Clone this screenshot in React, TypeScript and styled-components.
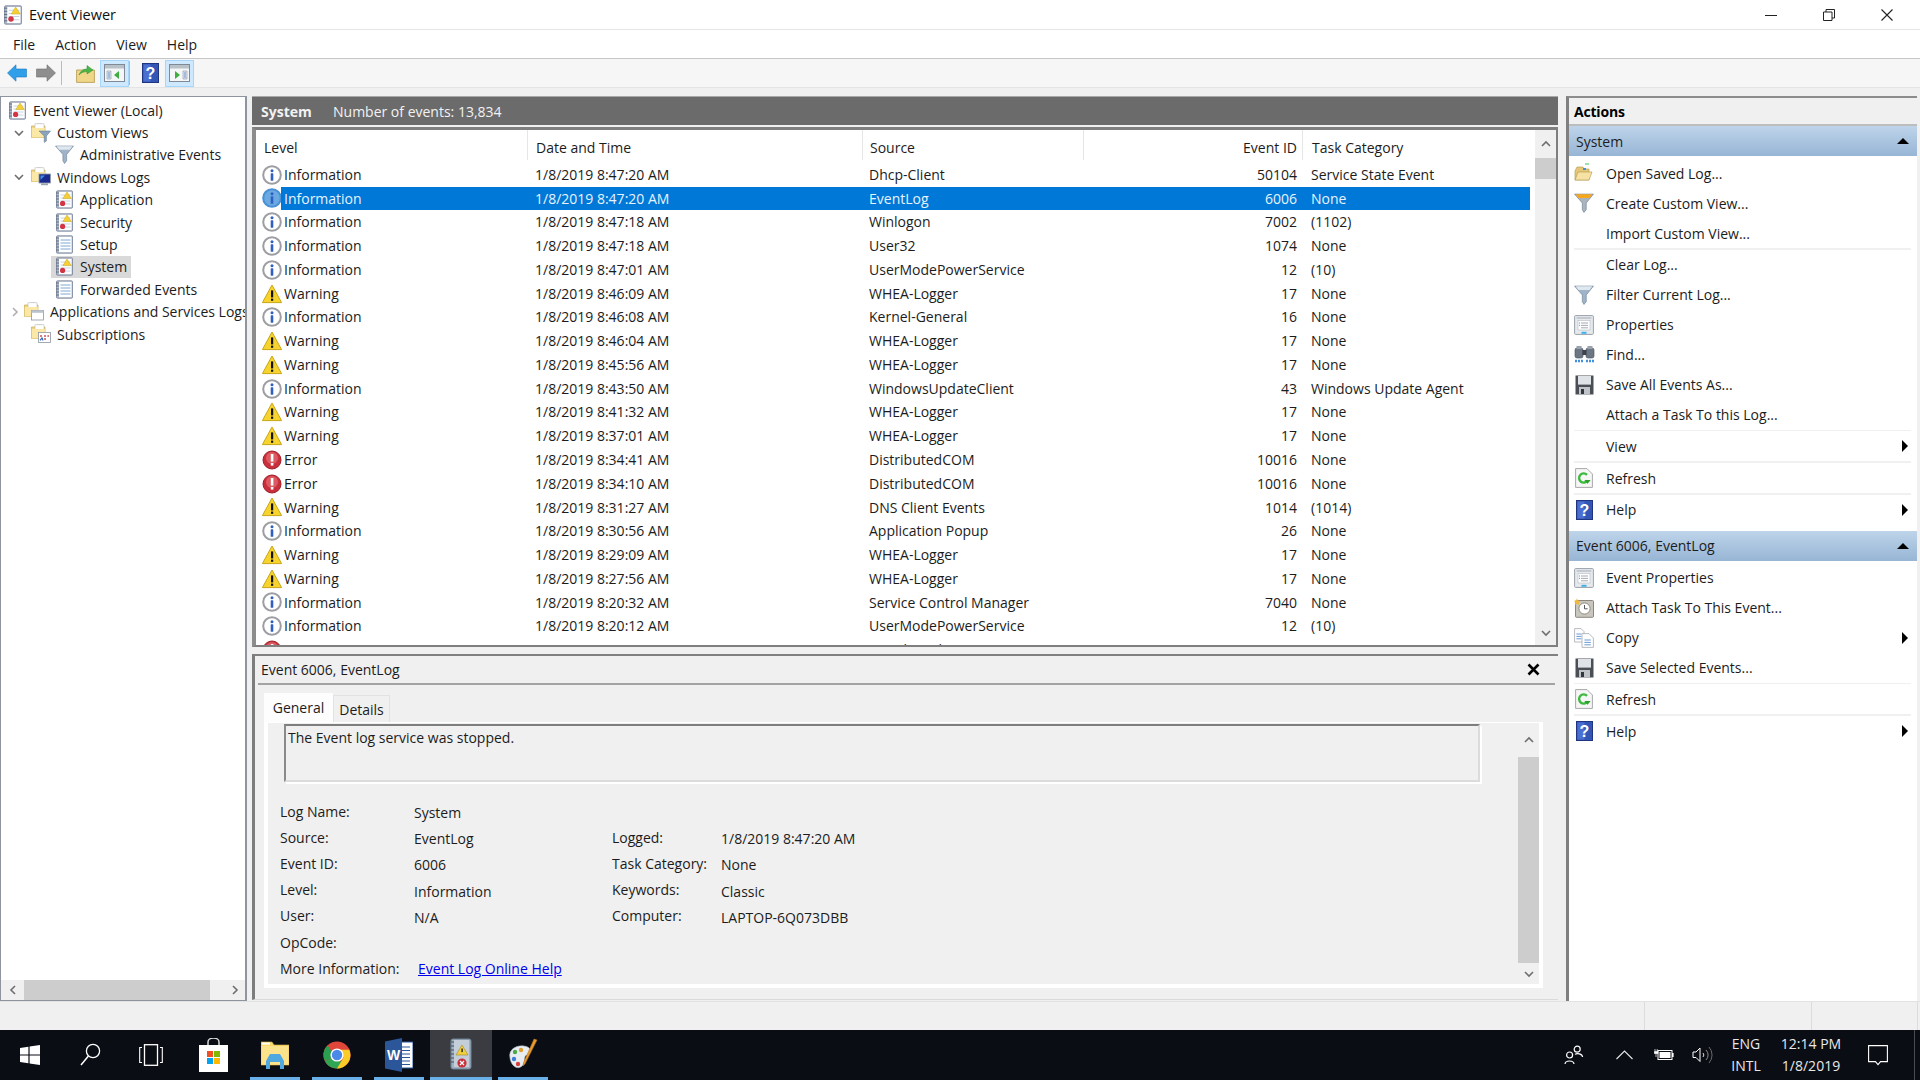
import * as React from "react";
import styled, { createGlobalStyle } from "styled-components";

const GlobalStyle = createGlobalStyle`
  html, body { margin: 0; padding: 0; background: #f0f0f0; }
  body {
    font-family: "Open Sans", "Noto Sans", "Liberation Sans", sans-serif;
    font-size: 14px;
    color: #1c1c1c;
    overflow: hidden;
  }
  svg { display: block; flex: none; }
`;

/* ---------- icons ---------- */

const InfoIcon = ({ selected }: { selected?: boolean }) => (
  <svg width="20" height="20" viewBox="0 0 20 20">
    <circle cx="10" cy="10" r="8.8" fill={selected ? "#6aa9e2" : "#fff"} stroke={selected ? "#4a90d4" : "#9c9ea3"} strokeWidth="2" />
    <circle cx="10" cy="5.8" r="1.5" fill="#2f5fc0" />
    <rect x="8.7" y="8.2" width="2.6" height="7.6" rx="0.6" fill="#2f5fc0" />
  </svg>
);

const WarnIcon = () => (
  <svg width="20" height="20" viewBox="0 0 20 20">
    <path d="M10 1 L19.6 18.6 H0.4 Z" fill="#f6d32d" stroke="#c9a616" strokeLinejoin="round" />
    <rect x="9" y="6.4" width="2.2" height="7" fill="#111" />
    <rect x="9" y="14.6" width="2.2" height="2.2" fill="#111" />
  </svg>
);

const ErrorIcon = () => (
  <svg width="20" height="20" viewBox="0 0 20 20">
    <circle cx="10" cy="10" r="9" fill="#c92f3b" stroke="#9c1f2a" />
    <circle cx="10" cy="8" r="6" fill="#dc5a62" />
    <rect x="8.8" y="4" width="2.6" height="7.6" fill="#fff" />
    <rect x="8.8" y="13" width="2.6" height="2.6" fill="#fff" />
  </svg>
);

const BookIcon = ({ size = 19, plain }: { size?: number; plain?: boolean }) => (
  <svg width={size} height={size} viewBox="0 0 19 19">
    <rect x="1.5" y="0.8" width="16" height="17.4" rx="1" fill="#aeb9c8" stroke="#77839a" strokeWidth="0.8" />
    <rect x="4" y="1.8" width="12.6" height="15.4" fill="#fff" />
    <path d="M1 3h3M1 6h3M1 9h3M1 12h3M1 15h3" stroke="#5d6980" strokeWidth="0.9" />
    <path d="M5.5 5h10M5.5 8h10M5.5 11h10M5.5 14h10" stroke={plain ? "#7ea6d6" : "#c5d2e2"} strokeWidth="1" />
    {!plain && (
      <>
        <path d="M12 2 L16.4 8.6 H7.8 Z" fill="#f5cf34" stroke="#c9a616" strokeWidth="0.5" />
        <circle cx="7.6" cy="13.4" r="2.6" fill="#d23644" />
      </>
    )}
  </svg>
);

const Funnel = ({ size = 18, tone = "#9fb4c8", top = "#dfe7ef" }: { size?: number; tone?: string; top?: string }) => (
  <svg width={size} height={size} viewBox="0 0 18 18">
    <path d="M0.5 1 H17.5 L11 9 V15 L9 17.5 L7.5 15 V9 Z" fill={tone} stroke="#6f8296" strokeWidth="0.6" />
    <path d="M1.5 1.2 H16.5 L14 4.4 H4 Z" fill={top} />
  </svg>
);

const FolderBase = ({ children }: { children?: React.ReactNode }) => (
  <svg width="20" height="20" viewBox="0 0 20 20">
    <path d="M0.5 3 H5 L6 1 H11 V3 H14 V14.5 H0.5 Z" fill="#f2d680" stroke="#c9a94f" strokeWidth="0.7" />
    <rect x="4" y="0.8" width="9" height="6" fill="#fff" stroke="#b7bcc4" strokeWidth="0.6" />
    <rect x="0.8" y="5" width="13" height="9.4" fill="#fbe8a6" />
    {children}
  </svg>
);

const FolderFunnel = () => (
  <FolderBase>
    <path d="M8 8 H19.5 L15.4 13 V18 L13.2 19.4 V13 Z" fill="#8aa4bb" stroke="#5f778d" strokeWidth="0.5" />
  </FolderBase>
);
const FolderMonitor = () => (
  <FolderBase>
    <rect x="8" y="7" width="11.4" height="9" fill="#1b2a8e" stroke="#8e9aa8" strokeWidth="0.8" />
    <rect x="10" y="16.4" width="7" height="1.8" fill="#9aa3ae" />
    <path d="M9.5 8.5 L14 8.5 L9.5 13 Z" fill="#3f8ee0" />
  </FolderBase>
);
const FolderWindow = () => (
  <FolderBase>
    <rect x="7.4" y="8.4" width="12" height="9.6" fill="#fff" stroke="#8c949e" strokeWidth="0.8" />
    <rect x="7.4" y="8.4" width="12" height="2.4" fill="#bcc4ce" />
  </FolderBase>
);
const FolderCalendar = () => (
  <FolderBase>
    <rect x="7.4" y="8.4" width="12" height="10" fill="#fff" stroke="#8c949e" strokeWidth="0.8" />
    <path d="M9 12h2M13 12h2M16.4 12h1.6M13 15h2" stroke="#c8505a" strokeWidth="1.3" />
    <path d="M9 16.4 L11 14 L12 16.4" stroke="#2f6fc0" strokeWidth="1.2" fill="none" />
  </FolderBase>
);

const HelpIcon = ({ w = 17, h = 20 }: { w?: number; h?: number }) => (
  <svg width={w} height={h} viewBox="0 0 17 20">
    <rect x="0.5" y="0.5" width="16" height="19" fill="#3355b5" stroke="#1f3580" />
    <rect x="1.5" y="1.5" width="7" height="17" fill="#4a6fd0" />
    <text x="8.5" y="16" textAnchor="middle" fontFamily="Liberation Sans, sans-serif" fontWeight="700" fontSize="16" fill="#fff">?</text>
  </svg>
);

const PaneIcon = ({ right }: { right?: boolean }) => (
  <svg width="21" height="18" viewBox="0 0 21 18">
    <rect x="0.5" y="0.5" width="20" height="17" fill="#f4f6f8" stroke="#7f8a94" />
    <rect x="1" y="1" width="19" height="3.5" fill="#b8c0c8" />
    {right ? (
      <>
        <path d="M6 7 L11 11 L6 15 Z" fill="#3fae3f" />
        <path d="M14 7h4v8h-4z" fill="#dfe6ee" stroke="#8c98a4" strokeWidth="0.6" />
        <path d="M15 9h2M15 11h2M15 13h2" stroke="#4d7fc0" strokeWidth="0.8" />
      </>
    ) : (
      <>
        <path d="M3 7h4v8H3z" fill="#dfe6ee" stroke="#8c98a4" strokeWidth="0.6" />
        <path d="M4 9h2M4 11h2M4 13h2" stroke="#4d7fc0" strokeWidth="0.8" />
        <path d="M15 7 L10 11 L15 15 Z" fill="#3fae3f" />
      </>
    )}
  </svg>
);

const ArrowIcon = ({ dir }: { dir: "back" | "forward" }) => (
  <svg width="20" height="18" viewBox="0 0 20 18">
    {dir === "back" ? (
      <path d="M0.5 9 L9 0.8 V5 H19.5 V13 H9 V17.2 Z" fill="#2f9fea" stroke="#2079bd" strokeWidth="0.6" />
    ) : (
      <path d="M19.5 9 L11 0.8 V5 H0.5 V13 H11 V17.2 Z" fill="#8e8e8e" stroke="#6f6f6f" strokeWidth="0.6" />
    )}
  </svg>
);

const UpFolderIcon = () => (
  <svg width="19" height="19" viewBox="0 0 19 19">
    <path d="M0.6 6 H18.4 V18.4 H0.6 Z" fill="#f0d688" stroke="#b3964a" strokeWidth="0.8" />
    <path d="M3 11 C5 6 8 5 11 5 V1.5 L17 6 L11 10 V7.6 C8 7.6 5.5 8.4 3 11Z" fill="#4ab64a" stroke="#2f8f2f" strokeWidth="0.5" />
  </svg>
);

const Chevron = ({ dir, color = "#6e6e6e", size = 10 }: { dir: "up" | "down" | "left" | "right"; color?: string; size?: number }) => {
  const d = {
    up: "M1 7 L5 3 L9 7",
    down: "M1 3 L5 7 L9 3",
    left: "M7 1 L3 5 L7 9",
    right: "M3 1 L7 5 L3 9",
  }[dir];
  return (
    <svg width={size} height={size} viewBox="0 0 10 10">
      <path d={d} fill="none" stroke={color} strokeWidth="1.6" />
    </svg>
  );
};

const OpenLogIcon = () => (
  <svg width="20" height="20" viewBox="0 0 20 20">
    <path d="M11 1h4" stroke="#3fc04a" strokeWidth="1" />
    <path d="M1 8 L3 4 H9 L10 6 H15 V17 H1 Z" fill="#e6c877" stroke="#b0944a" strokeWidth="0.6" />
    <path d="M1 17 L4 9 H18 L15 17 Z" fill="#f6e3a4" stroke="#b0944a" strokeWidth="0.6" />
    <rect x="9" y="5" width="3" height="2" fill="#3f90e0" />
  </svg>
);

const PropsIcon = () => (
  <svg width="20" height="20" viewBox="0 0 20 20">
    <rect x="0.6" y="0.6" width="18.8" height="18.8" rx="1" fill="#e6eaee" stroke="#9aa2aa" />
    <rect x="2.6" y="2" width="14.8" height="2" fill="#c4cad0" />
    <rect x="4" y="5.5" width="12" height="9.5" fill="#fff" stroke="#b5bcc4" strokeWidth="0.6" />
    <path d="M7 8h7M7 10.4h7M7 12.8h7" stroke="#8a95a0" strokeWidth="0.8" />
    <path d="M5 8h1M5 10.4h1" stroke="#3f90e0" strokeWidth="0.9" />
    <rect x="7.5" y="16.8" width="5" height="2" fill="#3fb0e8" />
  </svg>
);

const FindIcon = () => (
  <svg width="21" height="20" viewBox="0 0 21 20">
    <rect x="1" y="3" width="8" height="10" rx="2" fill="#6d7784" stroke="#444c57" strokeWidth="0.6" />
    <rect x="12" y="3" width="8" height="10" rx="2" fill="#6d7784" stroke="#444c57" strokeWidth="0.6" />
    <rect x="2.5" y="1" width="5" height="3" fill="#99a3ae" />
    <rect x="13.5" y="1" width="5" height="3" fill="#99a3ae" />
    <rect x="8.4" y="5" width="4" height="5" fill="#3c434c" />
    <path d="M1 16h8M12 16h8" stroke="#3f90e0" strokeWidth="2.4" strokeDasharray="2 1" />
  </svg>
);

const SaveIcon = () => (
  <svg width="19" height="20" viewBox="0 0 19 20">
    <path d="M0.5 0.5 H18.5 V19.5 H0.5 Z" fill="#4a4f56" />
    <rect x="3" y="1" width="13" height="8.6" fill="#dfe3e8" />
    <rect x="4" y="12" width="11" height="7.5" fill="#c0c4c9" />
    <rect x="6" y="14" width="3" height="5" fill="#33373d" />
  </svg>
);

const RefreshIcon = () => (
  <svg width="18" height="20" viewBox="0 0 18 20">
    <path d="M0.6 0.6 H12 L17.4 6 V19.4 H0.6 Z" fill="#f6f6f6" stroke="#a8a8a8" />
    <path d="M12.6 12.4 A4.6 4.6 0 1 1 12 6.8" fill="none" stroke="#3db93d" strokeWidth="2.4" />
    <path d="M9.4 12 H15.6 L12.6 15.8 Z" fill="#2f9f2f" />
  </svg>
);

const TaskIcon = () => (
  <svg width="20" height="20" viewBox="0 0 20 20">
    <rect x="1.5" y="2.5" width="18" height="16.8" rx="1" fill="#c9c6bf" stroke="#8a8780" />
    <circle cx="10.5" cy="10.5" r="5.6" fill="#fff" stroke="#8f8a78" />
    <path d="M10.5 7 V10.8 H13.6" fill="none" stroke="#555" strokeWidth="1" />
    <path d="M3 0.4 L4 2.6 L6.4 3 L4.6 4.6 L5 7 L3 5.8 L1 7 L1.4 4.6 L0 3 L2 2.6 Z" fill="#f4b834" />
  </svg>
);

const CopyIcon = () => (
  <svg width="20" height="20" viewBox="0 0 20 20">
    <path d="M0.6 0.6 H7 L10 3.6 V14 H0.6 Z" fill="#fff" stroke="#a4a9b0" strokeWidth="0.8" />
    <path d="M2.4 6h5M2.4 8.4h5M2.4 10.8h5" stroke="#5a8fd0" strokeWidth="0.9" />
    <path d="M8 5.6 H15 L19.4 10 V19.4 H8 Z" fill="#fff" stroke="#a4a9b0" strokeWidth="0.8" />
    <path d="M10.4 12h6.4M10.4 14.4h6.4M10.4 16.8h6.4" stroke="#5a8fd0" strokeWidth="0.9" />
  </svg>
);

const WinControl = ({ kind }: { kind: "min" | "max" | "close" }) => (
  <svg width="12" height="12" viewBox="0 0 12 12">
    {kind === "min" && <path d="M0 6.5 H12" stroke="#222" strokeWidth="1" />}
    {kind === "max" && (
      <path d="M0.5 3 H9 V11.5 H0.5 Z M3 3 V0.5 H11.5 V9 H9" fill="none" stroke="#222" strokeWidth="1" />
    )}
    {kind === "close" && <path d="M0.5 0.5 L11.5 11.5 M11.5 0.5 L0.5 11.5" stroke="#222" strokeWidth="1.1" />}
  </svg>
);

const WindowsLogo = () => (
  <svg width="20" height="20" viewBox="0 0 20 20">
    <path d="M0 3 L8.4 1.8 V9.4 H0 Z M9.6 1.6 L20 0 V9.4 H9.6 Z M0 10.6 H8.4 V18.2 L0 17 Z M9.6 10.6 H20 V20 L9.6 18.4 Z" fill="#fff" />
  </svg>
);
const SearchGlyph = () => (
  <svg width="21" height="24" viewBox="0 0 21 24">
    <circle cx="13" cy="8" r="6.6" fill="none" stroke="#fff" strokeWidth="1.3" />
    <path d="M8.4 13 L1 22" stroke="#fff" strokeWidth="1.5" />
  </svg>
);
const TaskViewGlyph = () => (
  <svg width="24" height="22" viewBox="0 0 24 22">
    <rect x="5.5" y="0.7" width="13" height="20.6" fill="none" stroke="#fff" strokeWidth="1.3" />
    <path d="M3 3.5 H0.7 V18.5 H3 M21 3.5 H23.3 V18.5 H21" fill="none" stroke="#fff" strokeWidth="1.1" />
  </svg>
);
const StoreIcon = () => (
  <svg width="29" height="34" viewBox="0 0 29 34">
    <path d="M9 8 V4 A5.5 4 0 0 1 20 4 V8" fill="none" stroke="#d8d8d8" strokeWidth="1.5" />
    <rect x="0" y="7" width="29" height="27" fill="#fff" />
    <rect x="8" y="13" width="6" height="6" fill="#f25022" />
    <rect x="15" y="13" width="6" height="6" fill="#7fba00" />
    <rect x="8" y="20" width="6" height="6" fill="#00a4ef" />
    <rect x="15" y="20" width="6" height="6" fill="#ffb900" />
  </svg>
);
const ExplorerIcon = () => (
  <svg width="28" height="28" viewBox="0 0 28 28">
    <path d="M0 1 H11 L13 4 H28 V24 H0 Z" fill="#fbd96a" stroke="#d9b44a" strokeWidth="0.6" />
    <rect x="0.5" y="5" width="27" height="18.6" fill="#fce28a" />
    <rect x="1" y="1.6" width="8" height="2" fill="#fff" />
    <path d="M5 28 V20 L9 13 H19 L23 20 V28 H19 V21 H9 V28 Z" fill="#4fa8e0" />
  </svg>
);
const ChromeIcon = () => (
  <svg width="28" height="34" viewBox="0 0 34 34">
    <circle cx="17" cy="17" r="16.5" fill="#e0463a" />
    <path d="M17 17 L2.6 25 A16.5 16.5 0 0 1 5.5 5.2 L12 15 Z" fill="#2a9f4f" />
    <path d="M2.6 25 A16.5 16.5 0 0 0 17 33.5 A16.5 16.5 0 0 0 25 31.4 L17 17 Z" fill="#2fa653" />
    <path d="M17 10.5 H32 A16.5 16.5 0 0 1 17 33.5 L25 20 Z" fill="#fbcb28" />
    <circle cx="17" cy="17" r="8" fill="#fff" />
    <circle cx="17" cy="17" r="6.3" fill="#4a89e8" />
  </svg>
);
const WordIcon = () => (
  <svg width="28" height="34" viewBox="0 0 28 34">
    <rect x="12" y="4" width="16" height="26" fill="#fff" stroke="#2b579a" />
    <path d="M15 9h10M15 12.5h10M15 16h10M15 19.5h10M15 23h10M15 26.5h10" stroke="#2b579a" strokeWidth="1.2" />
    <path d="M0 3.5 L17 0 V34 L0 30.5 Z" fill="#2b579a" />
    <text x="8.5" y="22" textAnchor="middle" fontFamily="Liberation Sans, sans-serif" fontWeight="700" fontSize="14" fill="#fff">W</text>
  </svg>
);
const EventAppIcon = () => (
  <svg width="24" height="34" viewBox="0 0 24 34">
    <rect x="2" y="1" width="20" height="30" rx="2" fill="#9eb0c2" stroke="#6f8295" />
    <rect x="5" y="2" width="15" height="27" fill="#c3ced9" />
    <path d="M2 4h3M2 8h3M2 12h3M2 16h3M2 20h3M2 24h3" stroke="#45515f" />
    <path d="M13 7 L19 17 H7 Z" fill="#f2cf3d" stroke="#a38a26" strokeWidth="0.6" />
    <rect x="12.4" y="10.5" width="1.4" height="3.6" fill="#222" />
    <circle cx="13" cy="25" r="4.6" fill="#c8303a" />
    <path d="M11 23 L15 27 M15 23 L11 27" stroke="#fff" strokeWidth="1.2" />
  </svg>
);
const PaintIcon = () => (
  <svg width="30" height="34" viewBox="0 0 30 34">
    <path d="M2 20 C0 11 9 7 16 8 C24 9 24 15 19 17 C15 18 18 23 15 27 C10 33 3 28 2 20 Z" fill="#e8edf2" stroke="#a8b4c0" strokeWidth="0.6" />
    <circle cx="7" cy="14" r="2.2" fill="#49a84a" />
    <circle cx="13" cy="12" r="2.2" fill="#e0a030" />
    <circle cx="6" cy="21" r="2.2" fill="#3f7fd8" />
    <circle cx="10" cy="26" r="2.2" fill="#d8403c" />
    <path d="M29 2 L17 26 L15 28 L15.6 24.6 L26 1 Z" fill="#e89a30" stroke="#b47016" strokeWidth="0.5" />
  </svg>
);
const PeopleGlyph = () => (
  <svg width="20" height="20" viewBox="0 0 20 20">
    <circle cx="13.2" cy="4.2" r="3" fill="none" stroke="#fff" strokeWidth="1.2" />
    <circle cx="5.6" cy="10" r="3" fill="none" stroke="#fff" strokeWidth="1.2" />
    <path d="M1 19 C1.4 15 9.6 15 10 19 M11 9.4 C13 7.8 18.2 8.6 18.6 12" fill="none" stroke="#fff" strokeWidth="1.2" />
  </svg>
);
const UpCaret = () => (
  <svg width="17" height="10" viewBox="0 0 17 10">
    <path d="M0.5 9 L8.5 1 L16.5 9" fill="none" stroke="#e8e8e8" strokeWidth="1.1" />
  </svg>
);
const BatteryGlyph = () => (
  <svg width="20" height="12" viewBox="0 0 20 12">
    <rect x="4" y="1.5" width="14" height="9" fill="none" stroke="#fff" strokeWidth="1" />
    <rect x="5.5" y="3" width="11" height="6" fill="#fff" />
    <rect x="18" y="4" width="1.6" height="4" fill="#fff" />
    <path d="M0.4 2.4 H4 V4.5 H0.4 Z M1 0 V2.4 M3.2 0 V2.4 M2 4.5 V8" fill="#fff" stroke="#fff" strokeWidth="0.7" />
  </svg>
);
const VolumeGlyph = () => (
  <svg width="21" height="18" viewBox="0 0 21 18">
    <path d="M1 6 H4 L8 2 V15.5 L4 11.5 H1 Z" fill="none" stroke="#fff" strokeWidth="1" />
    <path d="M11 7 A3 3 0 0 1 11 11" fill="none" stroke="#ddd" strokeWidth="1" />
    <path d="M14 4 A7 7 0 0 1 14 14" fill="none" stroke="#8a8a8a" strokeWidth="1" />
    <path d="M17 1 A12 12 0 0 1 17 17" fill="none" stroke="#6a6a6a" strokeWidth="1" />
  </svg>
);
const NotifyGlyph = () => (
  <svg width="20" height="21" viewBox="0 0 20 21">
    <path d="M0.6 0.6 H19.4 V16.6 H12.5 L10 19.6 L7.5 16.6 H0.6 Z" fill="none" stroke="#fff" strokeWidth="1.1" />
  </svg>
);

/* ---------- window chrome ---------- */

const Page = styled.div`
  width: 1920px;
  height: 1080px;
  display: flex;
  flex-direction: column;
  background: #f0f0f0;
  overflow: hidden;
`;

const TitleBar = styled.div`
  height: 29px;
  display: flex;
  align-items: center;
  padding-left: 3px;
  background: #fff;
  font-size: 14.5px;
  color: #111;
`;

const AppTitle = styled.span`
  margin-left: 6px;
`;

const WinButtons = styled.div`
  margin-left: auto;
  display: flex;
  padding-right: 4px;
`;

const WinButton = styled.div`
  width: 58px;
  height: 29px;
  display: flex;
  align-items: center;
  justify-content: center;
`;

const MenuBar = styled.div`
  height: 28px;
  display: flex;
  align-items: center;
  gap: 20px;
  padding-left: 13px;
  background: #fff;
  border-top: 1px solid #e6e6e6;
  border-bottom: 1px solid #c6c6c6;
`;

const ToolBar = styled.div`
  height: 28px;
  display: flex;
  align-items: center;
  background: #f6f6f6;
  padding-left: 2px;
  border-bottom: 1px solid #e4e4e4;
`;

const ToolButton = styled.div<{ $active?: boolean; $gap?: number }>`
  width: 29px;
  height: 27px;
  margin-left: ${(p) => p.$gap ?? 0}px;
  box-sizing: border-box;
  display: flex;
  align-items: center;
  justify-content: center;
  background: ${(p) => (p.$active ? "#cde8ff" : "transparent")};
  border: 1px solid ${(p) => (p.$active ? "#a5d6fb" : "transparent")};
`;

const ToolSep = styled.div<{ $gap?: number }>`
  width: 1px;
  height: 24px;
  margin-left: ${(p) => p.$gap ?? 0}px;
  background: #bcbcbc;
`;

const Main = styled.div`
  flex: 1;
  min-height: 0;
  margin-top: 8px;
  display: flex;
  padding-right: 3px;
`;

/* ---------- tree ---------- */

const TreePanel = styled.div`
  width: 247px;
  height: 906px;
  box-sizing: border-box;
  flex: none;
  display: flex;
  flex-direction: column;
  background: #fff;
  border: 2px solid #8f959e;
  border-left-width: 1px;
  border-top-width: 1px;
`;

const TreeList = styled.div`
  flex: 1;
  padding-top: 2px;
  overflow: hidden;
`;

const TreeRow = styled.div<{ $level: number }>`
  height: 22.4px;
  display: flex;
  align-items: center;
  white-space: nowrap;
  padding-left: ${(p) => [3, 9, 50][p.$level]}px;
`;

const Twisty = styled.div`
  width: 17px;
  display: flex;
  justify-content: center;
  margin-right: 0;
`;

const TreeNode = styled.div<{ $selected?: boolean }>`
  height: 22.4px;
  display: flex;
  align-items: center;
  gap: 6px;
  padding: 0 4px;
  background: ${(p) => (p.$selected ? "#d9d9d9" : "transparent")};
`;

const HScroll = styled.div`
  height: 20px;
  display: flex;
  align-items: center;
  background: #f0f0f0;
`;

const HThumb = styled.div`
  height: 20px;
  width: 188px;
  background: #cdcdcd;
  margin: 0 15px 0 0;
`;

const ScrollCap = styled.div<{ $w?: number; $h?: number }>`
  width: ${(p) => p.$w ?? 20}px;
  height: ${(p) => p.$h ?? 20}px;
  flex: none;
  display: flex;
  align-items: center;
  justify-content: center;
`;

/* ---------- event list ---------- */

const Center = styled.div`
  width: 1306px;
  margin-left: 5px;
  flex: none;
  display: flex;
  flex-direction: column;
`;

const SummaryBar = styled.div`
  height: 28px;
  flex: none;
  display: flex;
  align-items: center;
  background: #6b6b6b;
  border-top: 1px solid #a8a8a8;
  padding-left: 9px;
  color: #f2f2f2;
`;

const SummaryName = styled.span`
  font-weight: 700;
  width: 72px;
`;

const ListFrame = styled.div`
  height: 520px;
  flex: none;
  margin-top: 2px;
  box-sizing: border-box;
  display: flex;
  background: #fff;
  border: solid #7f7f7f;
  border-width: 3px 2px 2px 4px;
  border-left-color: #8c8c8c;
  overflow: hidden;
`;

const ListBody = styled.div`
  flex: 1;
  min-width: 0;
`;

const ColumnHeads = styled.div`
  height: 32.8px;
  display: grid;
  grid-template-columns: 271px 335px 221px 219px 1fr;
`;

const Head = styled.div<{ $right?: boolean; $pad?: number }>`
  height: 30px;
  line-height: 36px;
  box-sizing: border-box;
  border-left: 1px solid #e6e6e6;
  padding-left: ${(p) => p.$pad ?? 8}px;
  padding-right: 5px;
  text-align: ${(p) => (p.$right ? "right" : "left")};
  &:first-child { border-left: 0; }
`;

const EventRow = styled.div`
  height: 23.78px;
  display: flex;
  align-items: center;
  padding-left: 6px;
`;

const EventIconCell = styled.div`
  width: 19px;
  flex: none;
`;

const EventCells = styled.div<{ $selected?: boolean }>`
  width: 1249px;
  flex: none;
  height: 23.78px;
  line-height: 23.78px;
  display: grid;
  grid-template-columns: 254px 334px 214px 214px 233px;
  background: ${(p) => (p.$selected ? "#0078d7" : "transparent")};
  color: ${(p) => (p.$selected ? "#e8f3fc" : "inherit")};
`;

const Cell = styled.div<{ $right?: boolean; $pad?: number }>`
  white-space: nowrap;
  text-align: ${(p) => (p.$right ? "right" : "left")};
  padding-left: ${(p) => p.$pad ?? 0}px;
`;

const VScroll = styled.div`
  width: 21px;
  flex: none;
  display: flex;
  flex-direction: column;
  align-items: center;
  background: #f0f0f0;
`;

const VThumb = styled.div<{ $h: number }>`
  width: 100%;
  height: ${(p) => p.$h}px;
  background: #cdcdcd;
  flex: none;
`;

const VSpace = styled.div`
  flex: 1;
`;

/* ---------- detail ---------- */

const DetailPanel = styled.div`
  height: 346px;
  flex: none;
  margin-top: 7px;
  box-sizing: border-box;
  border-top: 2px solid #808080;
  border-left: 3px solid #7d7d7d;
  border-bottom: 1px solid #dadada;
  padding-left: 3px;
  display: flex;
  flex-direction: column;
`;

const DetailHead = styled.div`
  height: 27px;
  flex: none;
  display: flex;
  align-items: center;
  justify-content: space-between;
  padding: 0 15px 0 3px;
  margin-right: 3px;
  border-bottom: 2px solid #a3a3a3;
`;

const CloseX = styled.span`
  display: flex;
`;

const Tabs = styled.div`
  flex: none;
  height: 29px;
  margin-top: 8px;
  margin-left: 6px;
  display: flex;
  align-items: flex-end;
`;

const Tab = styled.div<{ $active?: boolean }>`
  height: ${(p) => (p.$active ? 29 : 27)}px;
  width: ${(p) => (p.$active ? 69 : 57)}px;
  box-sizing: border-box;
  display: flex;
  align-items: center;
  justify-content: center;
  background: ${(p) => (p.$active ? "#fdfdfd" : "#f0f0f0")};
  border: ${(p) => (p.$active ? "0" : "1px solid #e2e2e2")};
  border-bottom: 0;
`;

const TabBody = styled.div`
  width: 1279px;
  height: 265.5px;
  margin-left: 6px;
  box-sizing: border-box;
  background: #f0f0f0;
  border: solid #fff;
  border-width: 1px 4px 4px 4px;
  display: flex;
`;

const TabMain = styled.div`
  flex: 1;
  min-width: 0;
`;

const MessageBox = styled.div`
  width: 1196px;
  height: 58px;
  margin: 1px 0 0 16px;
  box-sizing: border-box;
  border: solid #dcdcdc;
  border-width: 2px 2px 2px 2px;
  border-top-color: #7e7e7e;
  border-left-color: #8a8a8a;
  padding: 2px 0 0 2px;
  box-shadow: 2px 2px 0 #fff;
`;

const Fields = styled.div`
  margin: 16px 0 0 12px;
  display: grid;
  grid-template-columns: 134px 198px 109px 1fr;
  grid-auto-rows: 26.2px;
  align-items: center;
`;

const Value = styled.div<{ $col?: number }>`
  padding-top: 3px;
  grid-column: ${(p) => p.$col ?? "auto"};
`;

const FieldLabel = styled.div<{ $col?: number }>`
  grid-column: ${(p) => p.$col ?? "auto"};
  white-space: nowrap;
`;

const HelpLink = styled.a`
  margin-left: 4px;
  color: #0000ee;
  text-decoration: underline;
`;

/* ---------- actions ---------- */

const ActionsPane = styled.div`
  flex: 1;
  margin-left: 8px;
  height: 905px;
  box-sizing: border-box;
  background: #fff;
  border-left: 3px solid #808080;
  border-top: 2px solid #8c8c8c;
`;

const ActionsTitle = styled.div`
  height: 26px;
  padding-left: 5px;
  display: flex;
  align-items: center;
  font-weight: 700;
  color: #000;
  background: #f0f0f0;
  border-bottom: 2px solid #bdbdbd;
  letter-spacing: -0.2px;
`;

const SectionHead = styled.div<{ $gap?: number }>`
  height: 30px;
  margin-top: ${(p) => p.$gap ?? 0}px;
  margin-bottom: 2px;
  padding: 0 8px 0 7px;
  display: flex;
  align-items: center;
  justify-content: space-between;
  background: linear-gradient(#bed4ea, #97b5d5);
`;

const ActionRow = styled.div`
  height: 30px;
  display: flex;
  align-items: center;
  padding: 0 9px 0 4px;
`;

const ActionIcon = styled.div`
  width: 22px;
  margin-right: 11px;
  flex: none;
  display: flex;
  justify-content: center;
`;

const ActionText = styled.div`
  flex: 1;
`;

const ActionSep = styled.div`
  height: 1.7px;
  margin: 0 6px 0 5px;
  background: #f0f0f0;
`;

const Caret = styled.div<{ $dir: "up" | "right" }>`
  width: 0;
  height: 0;
  ${(p) =>
    p.$dir === "up"
      ? "border-left: 6px solid transparent; border-right: 6px solid transparent; border-bottom: 6px solid #000;"
      : "border-top: 6px solid transparent; border-bottom: 6px solid transparent; border-left: 6px solid #000;"}
`;

/* ---------- status + taskbar ---------- */

const StatusBar = styled.div`
  height: 28px;
  flex: none;
  display: flex;
  justify-content: flex-end;
  border-top: 1px solid #e2e2e2;
`;

const StatusCell = styled.div<{ $w: number }>`
  width: ${(p) => p.$w}px;
  box-sizing: border-box;
  border-left: 1px solid #dcdcdc;
`;

const Taskbar = styled.div`
  height: 50px;
  flex: none;
  display: flex;
  align-items: stretch;
  background: #0a0d14;
  color: #e8e8e8;
`;

const TaskSlot = styled.div<{ $w?: number; $lit?: boolean; $open?: boolean }>`
  width: ${(p) => p.$w ?? 62}px;
  flex: none;
  position: relative;
  display: flex;
  align-items: center;
  justify-content: center;
  background: ${(p) => (p.$lit ? "#3a3c41" : "transparent")};
  &::after {
    content: "";
    display: ${(p) => (p.$open ? "block" : "none")};
    position: absolute;
    left: ${(p) => (p.$lit ? 0 : 6)}px;
    right: ${(p) => (p.$lit ? 0 : 6)}px;
    bottom: 0;
    height: 3px;
    background: #69b0e8;
  }
`;

const Tray = styled.div`
  margin-left: auto;
  display: flex;
  align-items: stretch;
`;

const TraySlot = styled.div<{ $w: number }>`
  width: ${(p) => p.$w}px;
  display: flex;
  flex-direction: column;
  align-items: center;
  justify-content: center;
  line-height: 22.4px;
  white-space: nowrap;
`;

const ShowDesktop = styled.div`
  width: 5px;
  border-left: 1px solid #4a4c50;
`;

/* ---------- data ---------- */

type Level = "Information" | "Warning" | "Error";

const W = "WHEA-Logger";
const UM = "UserModePowerService";
const DC = "DistributedCOM";

const events: [Level, string, string, string, string][] = [
  ["Information", "8:47:20", "Dhcp-Client", "50104", "Service State Event"],
  ["Information", "8:47:20", "EventLog", "6006", "None"],
  ["Information", "8:47:18", "Winlogon", "7002", "(1102)"],
  ["Information", "8:47:18", "User32", "1074", "None"],
  ["Information", "8:47:01", UM, "12", "(10)"],
  ["Warning", "8:46:09", W, "17", "None"],
  ["Information", "8:46:08", "Kernel-General", "16", "None"],
  ["Warning", "8:46:04", W, "17", "None"],
  ["Warning", "8:45:56", W, "17", "None"],
  ["Information", "8:43:50", "WindowsUpdateClient", "43", "Windows Update Agent"],
  ["Warning", "8:41:32", W, "17", "None"],
  ["Warning", "8:37:01", W, "17", "None"],
  ["Error", "8:34:41", DC, "10016", "None"],
  ["Error", "8:34:10", DC, "10016", "None"],
  ["Warning", "8:31:27", "DNS Client Events", "1014", "(1014)"],
  ["Information", "8:30:56", "Application Popup", "26", "None"],
  ["Warning", "8:29:09", W, "17", "None"],
  ["Warning", "8:27:56", W, "17", "None"],
  ["Information", "8:20:32", "Service Control Manager", "7040", "None"],
  ["Information", "8:20:12", UM, "12", "(10)"],
  ["Error", "8:19:50", DC, "10016", "None"],
];

const LevelIcon = ({ level, selected }: { level: Level; selected: boolean }) => {
  if (level === "Warning") return <WarnIcon />;
  if (level === "Error") return <ErrorIcon />;
  return <InfoIcon selected={selected} />;
};

const Tree = () => (
  <TreeList>
    <TreeRow $level={0}>
      <TreeNode><BookIcon />Event Viewer (Local)</TreeNode>
    </TreeRow>
    <TreeRow $level={1}>
      <Twisty><Chevron dir="down" /></Twisty>
      <TreeNode><FolderFunnel />Custom Views</TreeNode>
    </TreeRow>
    <TreeRow $level={2}>
      <TreeNode><Funnel size={19} />Administrative Events</TreeNode>
    </TreeRow>
    <TreeRow $level={1}>
      <Twisty><Chevron dir="down" /></Twisty>
      <TreeNode><FolderMonitor />Windows Logs</TreeNode>
    </TreeRow>
    <TreeRow $level={2}>
      <TreeNode><BookIcon />Application</TreeNode>
    </TreeRow>
    <TreeRow $level={2}>
      <TreeNode><BookIcon />Security</TreeNode>
    </TreeRow>
    <TreeRow $level={2}>
      <TreeNode><BookIcon plain />Setup</TreeNode>
    </TreeRow>
    <TreeRow $level={2}>
      <TreeNode $selected><BookIcon />System</TreeNode>
    </TreeRow>
    <TreeRow $level={2}>
      <TreeNode><BookIcon plain />Forwarded Events</TreeNode>
    </TreeRow>
    <TreeRow $level={1}>
      <Twisty><Chevron dir="right" color="#b0b0b0" /></Twisty>
      <TreeNode><FolderWindow />Applications and Services Logs</TreeNode>
    </TreeRow>
    <TreeRow $level={1}>
      <Twisty />
      <TreeNode><FolderCalendar />Subscriptions</TreeNode>
    </TreeRow>
  </TreeList>
);

const Action = ({ icon, text, more }: { icon?: React.ReactNode; text: string; more?: boolean }) => (
  <ActionRow>
    <ActionIcon>{icon}</ActionIcon>
    <ActionText>{text}</ActionText>
    {more && <Caret $dir="right" />}
  </ActionRow>
);

export default function App() {
  return (
    <Page>
      <GlobalStyle />
      <TitleBar>
        <BookIcon size={20} />
        <AppTitle>Event Viewer</AppTitle>
        <WinButtons>
          <WinButton><WinControl kind="min" /></WinButton>
          <WinButton><WinControl kind="max" /></WinButton>
          <WinButton><WinControl kind="close" /></WinButton>
        </WinButtons>
      </TitleBar>
      <MenuBar>
        <span>File</span>
        <span>Action</span>
        <span>View</span>
        <span>Help</span>
      </MenuBar>
      <ToolBar>
        <ToolButton><ArrowIcon dir="back" /></ToolButton>
        <ToolButton><ArrowIcon dir="forward" /></ToolButton>
        <ToolSep $gap={1} />
        <ToolButton $gap={9}><UpFolderIcon /></ToolButton>
        <ToolButton $active><PaneIcon /></ToolButton>
        <ToolSep />
        <ToolButton $gap={6}><HelpIcon /></ToolButton>
        <ToolButton $active><PaneIcon right /></ToolButton>
      </ToolBar>

      <Main>
        <TreePanel>
          <Tree />
          <HScroll>
            <ScrollCap $w={23}><Chevron dir="left" /></ScrollCap>
            <HThumb />
            <ScrollCap><Chevron dir="right" /></ScrollCap>
          </HScroll>
        </TreePanel>

        <Center>
          <SummaryBar>
            <SummaryName>System</SummaryName>
            <span>Number of events: 13,834</span>
          </SummaryBar>
          <ListFrame>
            <ListBody>
              <ColumnHeads>
                <Head>Level</Head>
                <Head>Date and Time</Head>
                <Head $pad={7}>Source</Head>
                <Head $right>Event ID</Head>
                <Head $pad={9}>Task Category</Head>
              </ColumnHeads>
              {events.map(([level, time, source, id, task], i) => (
                <EventRow key={i}>
                  <EventIconCell><LevelIcon level={level} selected={i === 1} /></EventIconCell>
                  <EventCells $selected={i === 1}>
                    <Cell $pad={3}>{level}</Cell>
                    <Cell>{`1/8/2019 ${time} AM`}</Cell>
                    <Cell>{source}</Cell>
                    <Cell $right>{id}</Cell>
                    <Cell $pad={14}>{task}</Cell>
                  </EventCells>
                </EventRow>
              ))}
            </ListBody>
            <VScroll>
              <ScrollCap $w={21} $h={28}><Chevron dir="up" /></ScrollCap>
              <VThumb $h={21} />
              <VSpace />
              <ScrollCap $w={21} $h={24}><Chevron dir="down" /></ScrollCap>
            </VScroll>
          </ListFrame>

          <DetailPanel>
            <DetailHead>
              <span>Event 6006, EventLog</span>
              <CloseX>
                <svg width="13" height="13" viewBox="0 0 13 13">
                  <path d="M1.5 1.5 L11.5 11.5 M11.5 1.5 L1.5 11.5" stroke="#000" strokeWidth="2.6" />
                </svg>
              </CloseX>
            </DetailHead>
            <Tabs>
              <Tab $active>General</Tab>
              <Tab>Details</Tab>
            </Tabs>
            <TabBody>
              <TabMain>
                <MessageBox>The Event log service was stopped.</MessageBox>
                <Fields>
                  <FieldLabel>Log Name:</FieldLabel>
                  <Value>System</Value>
                  <FieldLabel $col={1}>Source:</FieldLabel>
                  <Value>EventLog</Value>
                  <FieldLabel>Logged:</FieldLabel>
                  <Value>1/8/2019 8:47:20 AM</Value>
                  <FieldLabel $col={1}>Event ID:</FieldLabel>
                  <Value>6006</Value>
                  <FieldLabel>Task Category:</FieldLabel>
                  <Value>None</Value>
                  <FieldLabel $col={1}>Level:</FieldLabel>
                  <Value>Information</Value>
                  <FieldLabel>Keywords:</FieldLabel>
                  <Value>Classic</Value>
                  <FieldLabel $col={1}>User:</FieldLabel>
                  <Value>N/A</Value>
                  <FieldLabel>Computer:</FieldLabel>
                  <Value>LAPTOP-6Q073DBB</Value>
                  <FieldLabel $col={1}>OpCode:</FieldLabel>
                  <FieldLabel $col={1}>More Information:</FieldLabel>
                  <FieldLabel>
                    <HelpLink href="#">Event Log Online Help</HelpLink>
                  </FieldLabel>
                </Fields>
              </TabMain>
              <VScroll>
                <ScrollCap $w={20} $h={34}><Chevron dir="up" /></ScrollCap>
                <VThumb $h={206} />
                <VSpace />
                <ScrollCap $w={20} $h={20}><Chevron dir="down" /></ScrollCap>
              </VScroll>
            </TabBody>
          </DetailPanel>
        </Center>

        <ActionsPane>
          <ActionsTitle>Actions</ActionsTitle>
          <SectionHead>
            <span>System</span>
            <Caret $dir="up" />
          </SectionHead>
          <Action icon={<OpenLogIcon />} text="Open Saved Log..." />
          <Action icon={<Funnel size={20} tone="#a9b4be" top="#f7a71e" />} text="Create Custom View..." />
          <Action text="Import Custom View..." />
          <ActionSep />
          <Action text="Clear Log..." />
          <Action icon={<Funnel size={20} />} text="Filter Current Log..." />
          <Action icon={<PropsIcon />} text="Properties" />
          <Action icon={<FindIcon />} text="Find..." />
          <Action icon={<SaveIcon />} text="Save All Events As..." />
          <Action text="Attach a Task To this Log..." />
          <ActionSep />
          <Action text="View" more />
          <ActionSep />
          <Action icon={<RefreshIcon />} text="Refresh" />
          <ActionSep />
          <Action icon={<HelpIcon />} text="Help" more />
          <SectionHead $gap={6}>
            <span>Event 6006, EventLog</span>
            <Caret $dir="up" />
          </SectionHead>
          <Action icon={<PropsIcon />} text="Event Properties" />
          <Action icon={<TaskIcon />} text="Attach Task To This Event..." />
          <Action icon={<CopyIcon />} text="Copy" more />
          <Action icon={<SaveIcon />} text="Save Selected Events..." />
          <ActionSep />
          <Action icon={<RefreshIcon />} text="Refresh" />
          <ActionSep />
          <Action icon={<HelpIcon />} text="Help" more />
        </ActionsPane>
      </Main>

      <StatusBar>
        <StatusCell $w={167} />
        <StatusCell $w={106} />
        <StatusCell $w={3} />
      </StatusBar>

      <Taskbar>
        <TaskSlot $w={60}><WindowsLogo /></TaskSlot>
        <TaskSlot $w={60}><SearchGlyph /></TaskSlot>
        <TaskSlot $w={62}><TaskViewGlyph /></TaskSlot>
        <TaskSlot><StoreIcon /></TaskSlot>
        <TaskSlot $open><ExplorerIcon /></TaskSlot>
        <TaskSlot $open><ChromeIcon /></TaskSlot>
        <TaskSlot $open><WordIcon /></TaskSlot>
        <TaskSlot $open $lit><EventAppIcon /></TaskSlot>
        <TaskSlot $open><PaintIcon /></TaskSlot>
        <Tray>
          <TraySlot $w={58}><PeopleGlyph /></TraySlot>
          <TraySlot $w={42}><UpCaret /></TraySlot>
          <TraySlot $w={38}><BatteryGlyph /></TraySlot>
          <TraySlot $w={38}><VolumeGlyph /></TraySlot>
          <TraySlot $w={50}><span>ENG</span><span>INTL</span></TraySlot>
          <TraySlot $w={80}><span>12:14 PM</span><span>1/8/2019</span></TraySlot>
          <TraySlot $w={54}><NotifyGlyph /></TraySlot>
          <TraySlot $w={9} />
          <ShowDesktop />
        </Tray>
      </Taskbar>
    </Page>
  );
}
